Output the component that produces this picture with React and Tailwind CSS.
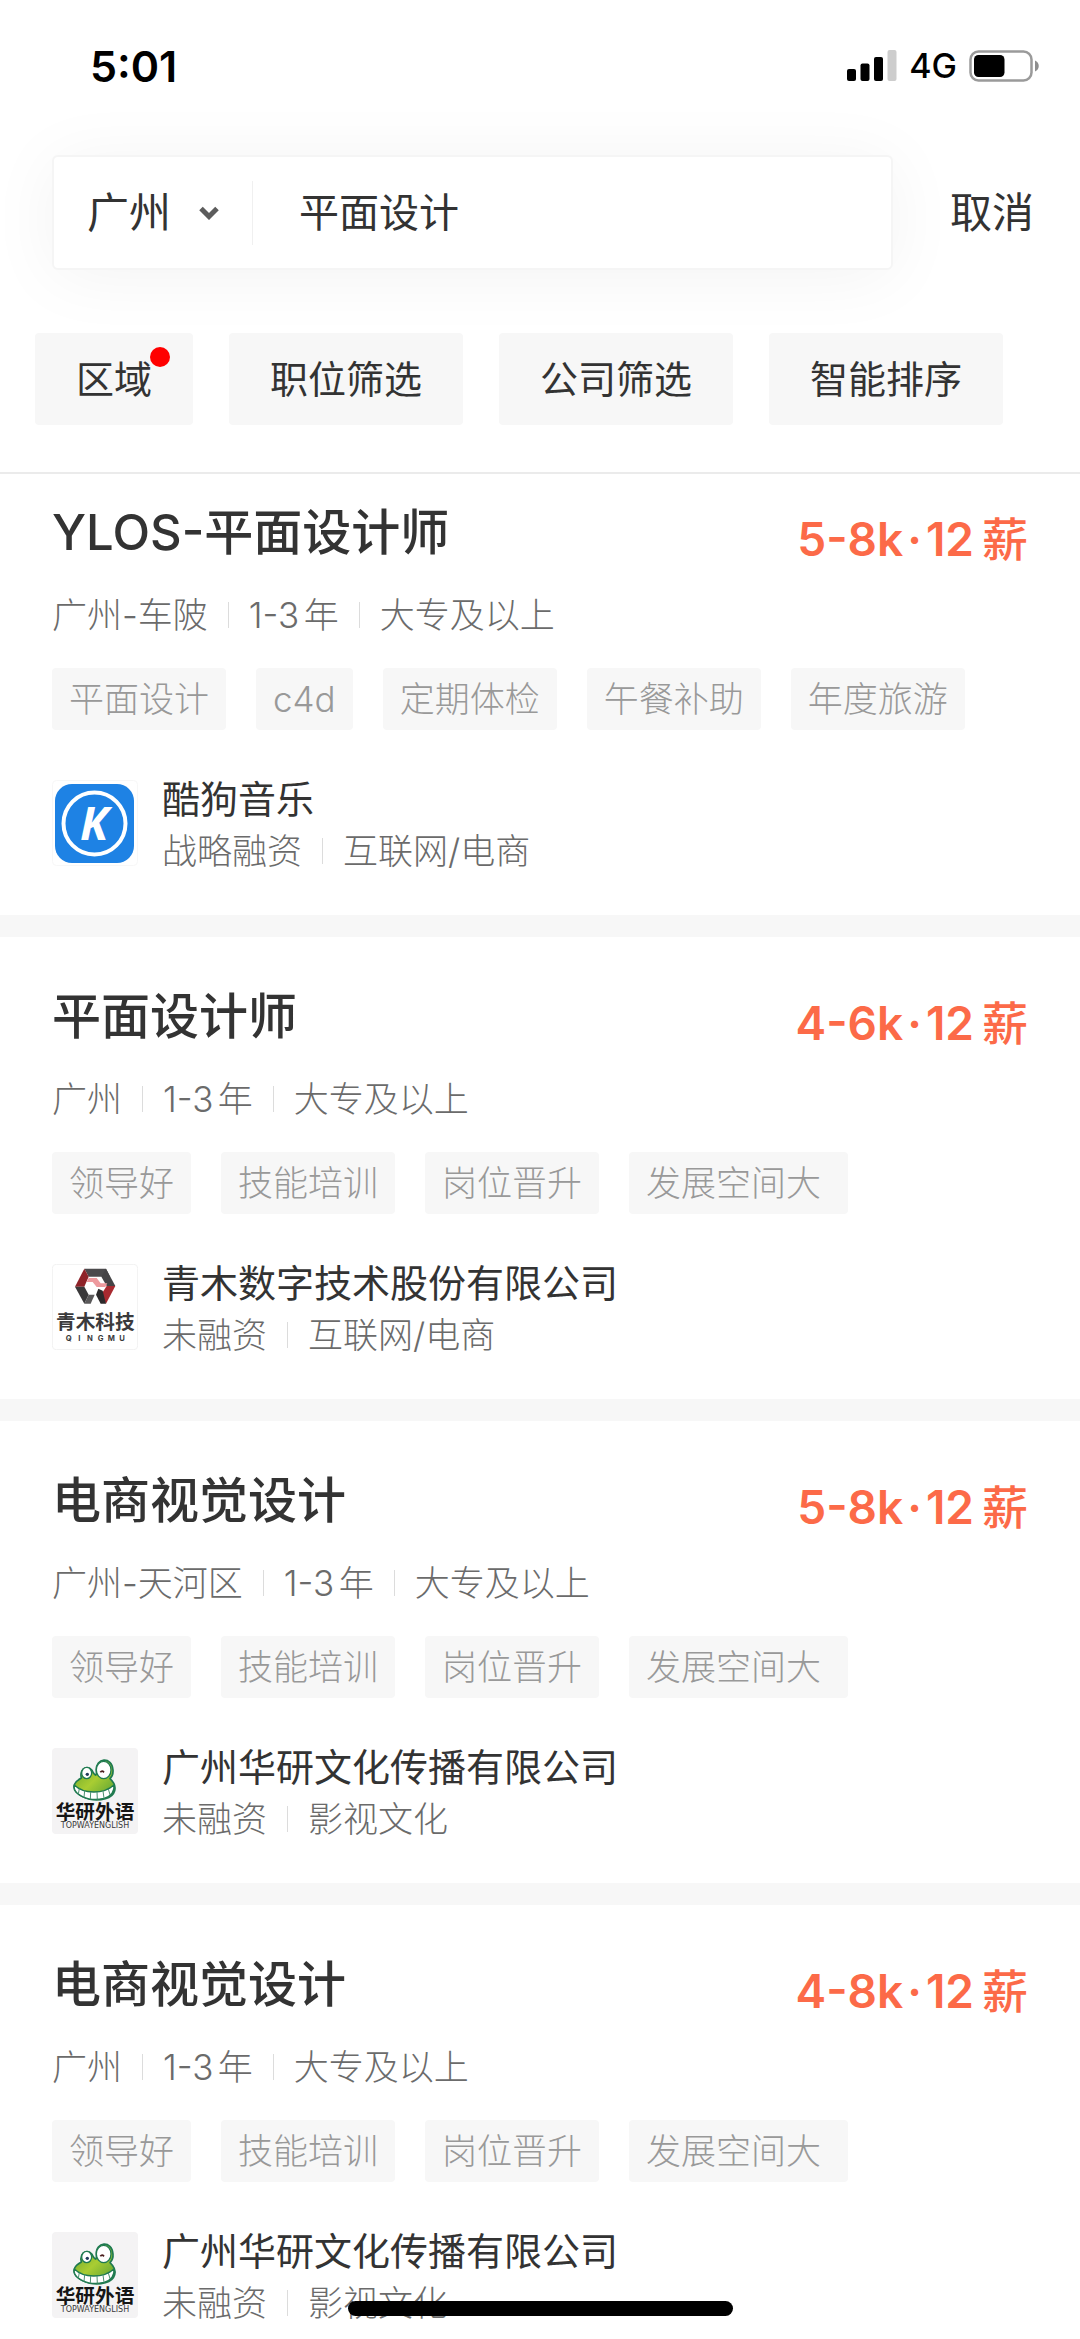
import { Fragment, useState } from "react";

const filters = [
  { label: "区域", hasDot: true },
  { label: "职位筛选" },
  { label: "公司筛选" },
  { label: "智能排序" },
];

const KugouLogo = () => (
  <svg viewBox="0 0 86 86" className="size-[86px] shrink-0" role="img" aria-label="酷狗音乐">
    <rect x="0.5" y="0.5" width="85" height="85" rx="4" fill="#fff" stroke="#f7f7f7" />
    <rect x="3" y="4" width="79" height="79" rx="17" fill="#1e82e4" />
    <circle cx="42.5" cy="43.5" r="31" fill="none" stroke="#fff" strokeWidth="4" />
    <text
      x="42"
      y="60"
      textAnchor="middle"
      fontFamily="Open Sans"
      fontWeight="700"
      fontStyle="italic"
      fontSize="46"
      fill="#fff"
    >
      K
    </text>
  </svg>
);

const QingmuLogo = () => (
  <svg viewBox="66 42 258 258" className="size-[86px] shrink-0" role="img" aria-label="青木科技">
    <rect x="67" y="43" width="256" height="256" rx="12" fill="#fff" stroke="#f1f1f1" strokeWidth="3" />
    <path d="M163 56H228L240 80H176Z" fill="#4b4a4c" />
    <path d="M163 56 176 80 163 110 135 110Z" fill="#8f2329" />
    <path d="M228 56 256 108 230 108 214 80Z" fill="#454446" />
    <path d="M256 108 228 161 213 134 230 108Z" fill="#a82a30" />
    <path d="M228 161H212L198 134 205 116 218 122Z" fill="#2c2a2b" />
    <path d="M135 110H163L176 134 163 161Z" fill="#3a393a" />
    <path d="M163 161 176 134 194 134 182 161Z" fill="#5a595a" />
    <path d="M176 84H200L212 100H232L226 111H200L188 96H170Z" fill="#ee9a9e" />
    <text
      x="196"
      y="236"
      textAnchor="middle"
      fontFamily="Noto Sans CJK SC"
      fontWeight="700"
      fontSize="59"
      fill="#3a3a3c"
    >
      青木科技
    </text>
    <g fontFamily="Inter" fontWeight="700" fontSize="23" fill="#3a3a3c" textAnchor="middle">
      {["Q", "I", "N", "G", "M", "U"].map((letter, i) => (
        <text key={letter} x={116 + i * 32} y="272">
          {letter}
        </text>
      ))}
    </g>
  </svg>
);

const HuayanLogo = () => (
  <svg viewBox="66 52 258 258" className="size-[86px] shrink-0" role="img" aria-label="华研外语">
    <defs>
      <linearGradient id="frog" x1="0" y1="0" x2="1" y2="1">
        <stop offset="0" stopColor="#5f9e2c" />
        <stop offset="0.5" stopColor="#a9cd32" />
        <stop offset="1" stopColor="#4d9a35" />
      </linearGradient>
    </defs>
    <rect x="66" y="52" width="258" height="258" rx="12" fill="#f4f3f4" />
    <path
      d="M154 142C146 112 180 98 190 126C198 138 200 134 199 120C196 80 246 76 249 118C250 130 246 138 240 144C266 168 256 196 226 204C196 213 160 206 138 184C124 166 136 152 154 142Z"
      fill="url(#frog)"
      stroke="#1f7a50"
      strokeWidth="5"
      strokeLinejoin="round"
    />
    <ellipse cx="170" cy="127" rx="15" ry="17" fill="#fff" stroke="#1f7a50" strokeWidth="4" />
    <ellipse cx="221" cy="118" rx="22" ry="26" fill="#fff" stroke="#1f7a50" strokeWidth="4" />
    <circle cx="172" cy="131" r="5" fill="#21395a" />
    <path d="M211 125q5-7 11 0" fill="none" stroke="#4b1c1c" strokeWidth="5" />
    <path
      d="M133 163C160 190 220 192 252 163C254 186 240 198 222 203C190 211 160 204 142 188C134 180 131 172 133 163Z"
      fill="#fff"
      stroke="#1f7a50"
      strokeWidth="4"
      strokeLinejoin="round"
    />
    <path
      d="M148 174 145 190M164 180 162 200M182 184 181 206M201 184 202 206M219 181 222 203M235 175 240 192"
      stroke="#4a8f6e"
      strokeWidth="3"
    />
    <text
      x="195"
      y="264"
      textAnchor="middle"
      fontFamily="Noto Sans CJK SC"
      fontWeight="700"
      fontSize="59"
      fill="#151515"
    >
      华研外语
    </text>
    <text
      x="195"
      y="291"
      textAnchor="middle"
      fontFamily="DejaVu Sans"
      fontSize="24"
      fill="#3a3a3a"
    >
      TOPWAYENGLISH
    </text>
  </svg>
);

const jobs = [
  {
    title: "YLOS-平面设计师",
    salary: "5-8k",
    meta: ["广州-车陂", "1-3年", "大专及以上"],
    tags: ["平面设计", "c4d", "定期体检", "午餐补助", "年度旅游"],
    logo: KugouLogo,
    company: "酷狗音乐",
    info: ["战略融资", "互联网/电商"],
  },
  {
    title: "平面设计师",
    salary: "4-6k",
    meta: ["广州", "1-3年", "大专及以上"],
    tags: ["领导好", "技能培训", "岗位晋升", "发展空间大 "],
    logo: QingmuLogo,
    company: "青木数字技术股份有限公司",
    info: ["未融资", "互联网/电商"],
  },
  {
    title: "电商视觉设计",
    salary: "5-8k",
    meta: ["广州-天河区", "1-3年", "大专及以上"],
    tags: ["领导好", "技能培训", "岗位晋升", "发展空间大 "],
    logo: HuayanLogo,
    company: "广州华研文化传播有限公司",
    info: ["未融资", "影视文化"],
  },
  {
    title: "电商视觉设计",
    salary: "4-8k",
    meta: ["广州", "1-3年", "大专及以上"],
    tags: ["领导好", "技能培训", "岗位晋升", "发展空间大 "],
    logo: HuayanLogo,
    company: "广州华研文化传播有限公司",
    info: ["未融资", "影视文化"],
  },
];

const StatusBar = () => (
  <div className="flex items-center justify-between pt-[42px] pr-[40px] pl-[90px] text-black">
    <span className="text-[43px] leading-[48px] font-semibold">5:01</span>
    <div className="flex items-center">
      <svg viewBox="0 0 50 32" className="h-[32px] w-[50px]" aria-hidden="true">
        <rect x="0" y="19" width="9" height="12" rx="2" />
        <rect x="13.5" y="13.5" width="9" height="17.5" rx="2" />
        <rect x="27" y="7" width="9" height="24" rx="2" />
        <rect x="40.5" y="0" width="9" height="31" rx="2" fill="#cdcdcd" />
      </svg>
      <span className="ml-[12px] text-[34px] leading-[48px] font-medium">4G</span>
      <svg viewBox="0 0 71 32" className="ml-[12px] h-[32px] w-[71px]" aria-hidden="true">
        <rect x="1.5" y="1.5" width="61" height="29" rx="8" fill="#fff" stroke="#9a9a9a" strokeWidth="2.5" />
        <rect x="5" y="5" width="30.5" height="22" rx="4.5" />
        <path d="M66 10.5c5 2 5 9 0 11z" fill="#8e8e8e" />
      </svg>
    </div>
  </div>
);

const InfoLine = ({ items, className }) => (
  <p className={`flex items-center gap-5 text-[35px] font-light text-[#6b6b6b] ${className}`}>
    {items.map((item, i) => (
      <Fragment key={item}>
        {i > 0 && <span className="h-[26px] w-px bg-[#dcdcdc]" />}
        <span>{item}</span>
      </Fragment>
    ))}
  </p>
);

const JobCard = ({ job, isFirst }) => (
  <li className={`bg-white px-[52px] pb-[47px] ${isFirst ? "pt-[29px]" : "pt-[50px]"}`}>
    <div className="flex items-end justify-between">
      <h2 className="text-[49px] leading-[60px] font-medium text-[#333]">{job.title}</h2>
      <p className="flex text-[46px] leading-[48px] font-semibold text-[#fc6a48]">
        {job.salary}
        <span className="mx-1">·</span>
        12
        <span className="ml-2 font-medium">薪</span>
      </p>
    </div>
    <InfoLine items={job.meta} className="mt-[30px] leading-[44px]" />
    <ul className="mt-[31px] flex gap-[30px]">
      {job.tags.map((tag) => (
        <li
          key={tag}
          className="rounded-sm bg-[#f7f7f7] px-[17px] text-[35px] leading-[62px] font-light whitespace-pre text-[#999]"
        >
          {tag}
        </li>
      ))}
    </ul>
    <div className="mt-[50px] flex items-start gap-6">
      <job.logo />
      <div className="flex flex-col gap-4">
        <h3 className="text-[38px] leading-[38px] text-[#333]">{job.company}</h3>
        <InfoLine items={job.info} className="leading-[34px]" />
      </div>
    </div>
  </li>
);

const App = () => {
  const [city, setCity] = useState("广州");
  const [keyword, setKeyword] = useState("平面设计");

  return (
    <div className="relative flex h-screen flex-col overflow-hidden bg-white font-[Inter,'Noto_Sans_CJK_SC',sans-serif] [text-autospace:normal]">
      <header className="shrink-0 border-b-2 border-[#ebebeb] bg-white">
        <StatusBar />

        {/* Search */}
        <div className="mt-[65px] flex items-center gap-[57px] pr-[46px] pl-[52px]">
          <form
            className="flex h-[115px] min-w-0 flex-1 items-center rounded-md border-2 border-[#f5f5f5] bg-white pl-[33px] shadow-[0_6px_70px_rgba(0,0,0,0.05)]"
            onSubmit={(e) => e.preventDefault()}
          >
            <select
              aria-label="城市"
              value={city}
              onChange={(e) => setCity(e.target.value)}
              className="appearance-none bg-transparent text-[42px] leading-[60px] text-[#333] outline-none"
            >
              <option>广州</option>
              <option>深圳</option>
              <option>北京</option>
            </select>
            <svg viewBox="0 0 20 14" className="ml-[27px] h-[14px] w-[20px]" aria-hidden="true">
              <path d="M2 2.5 10 10.5 18 2.5" fill="none" stroke="#5c5c5c" strokeWidth="5" />
            </svg>
            <span className="ml-[33px] h-[64px] w-px bg-[#f0f0f0]" />
            <input
              type="text"
              aria-label="搜索职位"
              value={keyword}
              onChange={(e) => setKeyword(e.target.value)}
              className="ml-[46px] min-w-0 flex-1 bg-transparent text-[40px] leading-[60px] text-[#333] outline-none"
            />
          </form>
          <button type="button" className="text-[42px] leading-[60px] text-[#333]">
            取消
          </button>
        </div>

        {/* Filters */}
        <div className="flex gap-9 px-[35px] pt-[63px] pb-[47px]">
          {filters.map((filter) => (
            <button
              key={filter.label}
              type="button"
              className="relative rounded-sm bg-[#f7f7f7] px-[41px] text-[38px] leading-[92px] text-[#333]"
            >
              {filter.label}
              {filter.hasDot && (
                <span className="absolute top-[14px] right-[23px] size-5 rounded-full bg-[#ff0000]" />
              )}
            </button>
          ))}
        </div>
      </header>

      {/* Job list */}
      <main className="min-h-0 flex-1 overflow-hidden">
        <ul className="flex flex-col gap-[22px] bg-[#f7f7f7]">
          {jobs.map((job, i) => (
            <JobCard key={i} job={job} isFirst={i === 0} />
          ))}
        </ul>
      </main>

      {/* Home indicator */}
      <div className="absolute inset-x-0 bottom-[23px] flex justify-center">
        <span className="h-[15px] w-[385px] rounded-full bg-black" />
      </div>
    </div>
  );
};

export default App;
